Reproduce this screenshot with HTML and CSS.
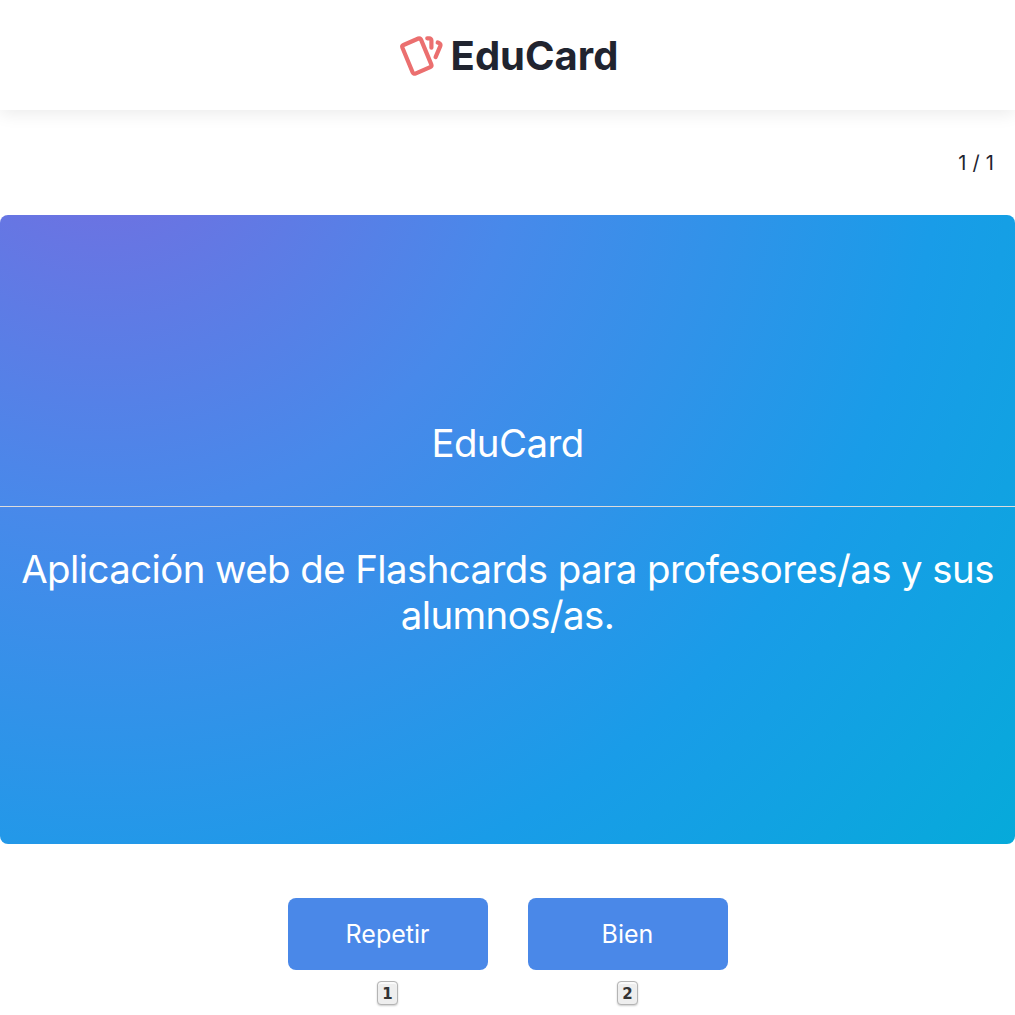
FILE: index.html
```html
<!DOCTYPE html>
<html lang="es">
<head>
<meta charset="utf-8">
<title>EduCard</title>
<link rel="stylesheet" href="styles.css">
</head>
<body>
<header class="header">
  <svg class="logo" viewBox="0 0 24 24" width="50" height="50" fill="none" stroke="#eb6f6f" stroke-width="2" stroke-linecap="round" stroke-linejoin="round"><path d="M3.604 7.197l7.138 -3.109a.96 .96 0 0 1 1.27 .527l4.924 11.902a1 1 0 0 1 -.514 1.304l-7.137 3.109a.96 .96 0 0 1 -1.271 -.527l-4.924 -11.903a1 1 0 0 1 .514 -1.304z"/><path d="M15 4h1a1 1 0 0 1 1 1v3.5"/><path d="M20 6c.264 .112 .52 .217 .768 .315a1 1 0 0 1 .53 1.311l-2.298 5.374"/></svg>
  <h1 class="brand">EduCard</h1>
</header>
<main class="study">
  <p class="counter">1 / 1</p>
  <section class="card">
    <div class="front">EduCard</div>
    <div class="back">Aplicación web de Flashcards para profesores/as y sus alumnos/as.</div>
  </section>
  <div class="actions">
    <div class="action"><button class="button">Repetir</button><kbd class="key">1</kbd></div>
    <div class="action"><button class="button">Bien</button><kbd class="key">2</kbd></div>
  </div>
</main>
</body>
</html>
```
FILE: styles.css
```css
* { box-sizing: border-box; }
body { margin: 0; height: 1015px; overflow: hidden; background: #fff; color: #21242f; font-family: Inter, sans-serif; }
.header { height: 110px; display: flex; align-items: center; justify-content: center; gap: 4px; padding-top: 2px; box-shadow: 0 4px 16px rgba(0,0,0,.08); }
.logo { flex: none; margin: -2px 1px 0 -1px; }
.brand { margin: 0; font-size: 40px; line-height: 48px; font-weight: 700; }
.counter { margin: 0; height: 105px; padding: 0 21px; line-height: 106px; font-size: 20px; text-align: right; word-spacing: .5px; }
.card { height: 629px; border-radius: 8px; overflow: hidden; color: #fff; font-size: 38.4px; line-height: 46px; letter-spacing: -.57px; text-align: center; background: radial-gradient(circle farthest-corner at 10% -20%, #6b73e2 10%, #4889ea 36%, #199ce8 71%, #06aada 100%); }
.front { height: 292px; padding: 205px 20px 0; border-bottom: 1px solid #dcdcdc; }
.back { padding: 39px 20px 0; }
.actions { display: flex; justify-content: center; gap: 40px; padding-top: 54px; }
.action { width: 200px; display: flex; flex-direction: column; align-items: center; gap: 11px; }
.button { width: 200px; height: 72px; border: 0; border-radius: 8px; background: #4a88e8; color: #fff; font: 400 25px Inter, sans-serif; }
.key { width: 21px; height: 24px; border: 1px solid #b4b4b4; border-radius: 4px; background: #eee; box-shadow: 0 1px 2px rgba(0,0,0,.2), 0 2px 0 rgba(255,255,255,.7) inset; color: #333; font: 700 15px/24px "DejaVu Sans", sans-serif; text-align: center; }
```
